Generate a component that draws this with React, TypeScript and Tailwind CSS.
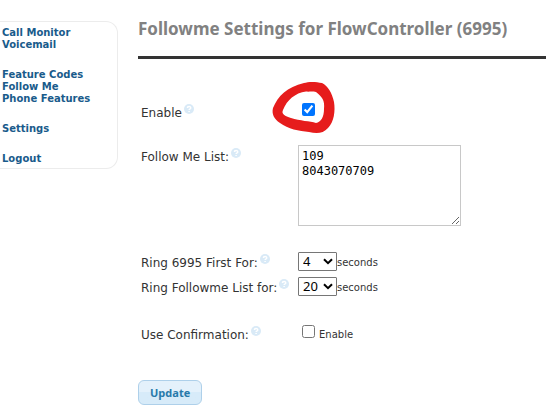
import React, { useState } from 'react';

const menuGroups: string[][] = [
  ['Call Monitor', 'Voicemail'],
  ['Feature Codes', 'Follow Me', 'Phone Features'],
  ['Settings'],
  ['Logout'],
];

const HelpIcon: React.FC = () => (
  <svg viewBox="0 0 10 10" className="mb-2 ml-0.5 h-2.5 w-2.5 shrink-0" aria-hidden="true">
    <circle cx="5" cy="5" r="5" fill="#d9eaf7" />
    <path d="M3.4 4C3.4 1.9 6.7 1.9 6.7 3.9C6.7 5 5.1 5 5.1 6.1M5.1 7V8.1" fill="none" stroke="#fff" strokeWidth="1.5" />
  </svg>
);

const FieldLabel: React.FC<{ htmlFor: string; children: React.ReactNode }> = ({ htmlFor, children }) => (
  <div className="flex h-6 w-[157px] shrink-0 items-center pt-1">
    <label htmlFor={htmlFor} className="whitespace-nowrap">{children}</label>
    <HelpIcon />
  </div>
);

const SideMenu: React.FC = () => (
  <nav className="mt-[21px] w-[118px] shrink-0 rounded-r-xl border border-l-0 border-[#ececec] pb-[3px] pl-0.5 pt-[5px] font-['Verdana','DejaVu_Sans',sans-serif] text-[10px] font-bold leading-3 text-[#195b8b]">
    <div className="flex flex-col gap-[18px]">
      {menuGroups.map((group) => (
        <ul key={group[0]}>
          {group.map((item) => (
            <li key={item}>
              <a href="#" className="whitespace-nowrap">{item}</a>
            </li>
          ))}
        </ul>
      ))}
    </div>
  </nav>
);

type SecondsSelectProps = {
  id: string;
  value: string;
  options: string[];
  onChange: (value: string) => void;
};

const SecondsSelect: React.FC<SecondsSelectProps> = ({ id, value, options, onChange }) => (
  <div className="flex items-center">
    <div className="relative">
      <select
        id={id}
        value={value}
        onChange={(e) => onChange(e.target.value)}
        className="block h-[19px] w-[39px] appearance-none rounded-[1px] border border-[#767676] bg-white pl-1 font-['Noto_Sans',sans-serif] text-[13px] leading-4 text-black"
      >
        {options.map((option) => (
          <option key={option}>{option}</option>
        ))}
      </select>
      <svg viewBox="0 0 10 7" className="pointer-events-none absolute right-1 top-1.5 h-[7px] w-2.5" aria-hidden="true">
        <path d="M1 1.2L5 5.2L9 1.2" fill="none" stroke="#000" strokeWidth="2" />
      </svg>
    </div>
    <span className="pt-0.5 font-['DejaVu_Sans',sans-serif] text-[10px]">seconds</span>
  </div>
);

const App: React.FC = () => {
  const [enabled, setEnabled] = useState(true);
  const [list, setList] = useState('109\n8043070709');
  const [ringFirst, setRingFirst] = useState('4');
  const [ringList, setRingList] = useState('20');
  const [confirm, setConfirm] = useState(false);

  return (
    <div className="flex items-start gap-5 bg-white text-[#333]">
      <SideMenu />
      <main className="min-w-0 flex-1 pt-[17px]">
        <h2 className="border-b-3 border-[#333] pb-[15px] font-['Noto_Sans',sans-serif] text-[17px] font-bold leading-6 text-[#818181]">
          Followme Settings for FlowController (6995)
        </h2>
        <form onSubmit={(e) => e.preventDefault()} className="pl-[3px] pt-10 font-['DejaVu_Sans',sans-serif] text-[12px]">
          <div className="flex items-center">
            <FieldLabel htmlFor="enable">Enable</FieldLabel>
            <div className="relative mb-1 ml-1 h-[13px] w-[13px]">
              <input
                id="enable"
                type="checkbox"
                checked={enabled}
                onChange={(e) => setEnabled(e.target.checked)}
                className="block h-[13px] w-[13px]"
              />
              <svg viewBox="0 0 66 54" className="pointer-events-none absolute -left-[31px] -top-[23px] h-[54px] w-[66px] max-w-none" aria-hidden="true">
                <path
                  fillRule="evenodd"
                  fill="#e61c1c"
                  d="M33 3C37 1.500 45 1.500 51 3C57 6 61 13 63 22C64.500 31 63 42 57 48C52 53.500 46 54 38 52C28 51 17 49 9 43C3 39 0.500 34 2 28C7 16 16 7 33 3ZM35 11.500C24 13 16 20 12 30C10 34 14 36 20 38C29 41 39 41 45 43C50 42 53 37 53 29C54 20 51 17 45 12C41 11 38 12 35 11.500Z"
                />
              </svg>
            </div>
          </div>

          <div className="mt-5 flex items-start">
            <FieldLabel htmlFor="list">Follow Me List:</FieldLabel>
            <textarea
              id="list"
              value={list}
              onChange={(e) => setList(e.target.value)}
              className="mt-0.5 block h-[81px] w-[163px] resize border border-[#c8c8c8] px-[3px] py-[3px] font-['DejaVu_Sans_Mono',monospace] text-[12px] leading-[15px] text-black"
            />
          </div>

          <div className="mt-[23px] flex items-center">
            <FieldLabel htmlFor="ring-first">Ring 6995 First For:</FieldLabel>
            <SecondsSelect id="ring-first" value={ringFirst} options={['4', '10', '20']} onChange={setRingFirst} />
          </div>

          <div className="mt-px flex items-center">
            <FieldLabel htmlFor="ring-list">Ring Followme List for:</FieldLabel>
            <SecondsSelect id="ring-list" value={ringList} options={['10', '20', '30']} onChange={setRingList} />
          </div>

          <div className="mt-[23px] flex items-center">
            <FieldLabel htmlFor="confirm">Use Confirmation:</FieldLabel>
            <input
              id="confirm"
              type="checkbox"
              checked={confirm}
              onChange={(e) => setConfirm(e.target.checked)}
              className="mb-1 ml-1 block h-[13px] w-[13px]"
            />
            <label htmlFor="confirm" className="ml-1 pt-0.5 font-['DejaVu_Sans',sans-serif] text-[10px]">Enable</label>
          </div>

          <button
            type="submit"
            className="-ml-[3px] mt-[35px] block h-[25px] rounded-md border border-[#aed0ea] bg-linear-to-b from-[#e4f1fb] from-50% to-[#d7ebf9] to-50% px-[11px] font-['Open_Sans',sans-serif] text-[11px] font-bold leading-4 text-[#2779aa]"
          >
            Update
          </button>
        </form>
      </main>
    </div>
  );
};

export default App;
